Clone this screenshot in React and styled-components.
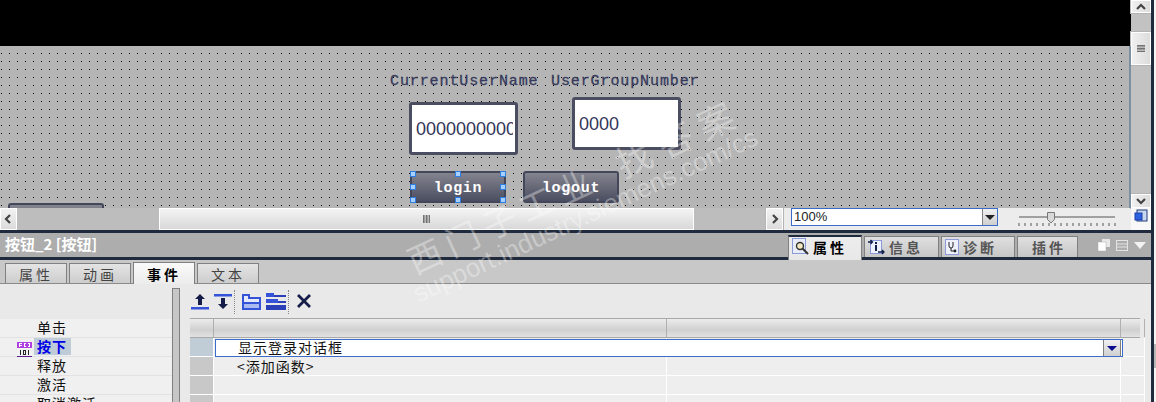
import React from 'react'
import styled, { createGlobalStyle } from 'styled-components'

const CJK = `"Noto Sans CJK SC", "Liberation Sans", sans-serif`

const GlobalStyle = createGlobalStyle`
  html, body {
    margin: 0;
    padding: 0;
    background: #f4f4f4;
  }
  * {
    box-sizing: border-box;
  }
`

const Page = styled.div`
  position: relative;
  width: 1156px;
  height: 402px;
  display: flex;
  overflow: hidden;
  font-family: ${CJK};
  background: #f4f4f4;
`

const MainColumn = styled.div`
  width: 1151px;
  flex: none;
  display: flex;
  flex-direction: column;
`

const OuterEdge = styled.div`
  width: 3px;
  flex: none;
  background: #1f2a3c;
`

const SideStrip = styled.div`
  width: 2px;
  flex: none;
  padding-top: 144px;
`

const SideMark = styled.div`
  height: 24px;
  margin-top: 200px;
  background: #b8b8b8;
`

/* editor area */
const Workspace = styled.div`
  display: flex;
  height: 230px;
  flex: none;
`

const EditorColumn = styled.div`
  width: 1131px;
  display: flex;
  flex-direction: column;
`

const BlackBand = styled.div`
  height: 46px;
  background: #000;
`

const Canvas = styled.div`
  position: relative;
  height: 162px;
  overflow: hidden;
  border-right: 2px solid #7c90a4;
  background-color: #000;
  background-image:
    linear-gradient(to bottom, #b5b5b5 7px, transparent 7px),
    linear-gradient(to right, #b5b5b5 7px, transparent 7px);
  background-size: 8px 8px;
  background-position: 2px 0;
`

const TagLabel = styled.div`
  position: absolute;
  top: ${p => p.$top}px;
  left: ${p => p.$left}px;
  font: 15px/16px "Liberation Mono", monospace;
  letter-spacing: 0.9px;
  color: #363a5c;
  -webkit-text-stroke: 0.3px #363a5c;
  white-space: nowrap;
`

const IoField = styled.div`
  position: absolute;
  top: ${p => p.$top}px;
  left: ${p => p.$left}px;
  width: 109px;
  height: 53px;
  padding-left: 4px;
  display: flex;
  align-items: center;
  background: #fff;
  border: 3px solid #4b4e60;
  border-radius: 3px;
  font: 18px/20px "Liberation Sans", sans-serif;
  color: #33365a;
`

const IoValue = styled.span`
  width: 97px;
  overflow: hidden;
  white-space: nowrap;
`

const HmiButton = styled.div`
  position: absolute;
  top: ${p => p.$top}px;
  left: ${p => p.$left}px;
  width: 96px;
  height: 32px;
  display: flex;
  align-items: center;
  justify-content: center;
  padding-top: 4px;
  background: linear-gradient(#83848f, #4b4e60);
  border: 2px solid #44475a;
  border-radius: 3px;
  font: bold 15px/16px "Liberation Mono", monospace;
  letter-spacing: 0.7px;
  color: #fff;
`

const Handle = styled.span`
  position: absolute;
  top: ${p => p.$top}px;
  left: ${p => p.$left}px;
  width: 6px;
  height: 6px;
  background: #a7d0ff;
  border: 1px solid #2f7de0;
`

const ScrollRow = styled.div`
  height: 22px;
  display: flex;
  background: #ececec;
`

const ScrollButton = styled.div`
  width: 17px;
  flex: none;
  display: flex;
  align-items: center;
  justify-content: center;
  background: linear-gradient(#f2f2f2, #dcdcdc);
  border: 1px solid #fff;
  box-shadow: 0 0 0 1px #b4b4b4;
`

const Track = styled.div`
  width: ${p => p.$width}px;
  flex: none;
  background: #bdbdbd;
`

const Thumb = styled.div`
  width: ${p => p.$width}px;
  flex: none;
  display: flex;
  align-items: center;
  justify-content: center;
  background: linear-gradient(#f4f4f4, #d8d8d8);
  border: 1px solid #fff;
`

const ZoomSelect = styled.div`
  width: 207px;
  height: 18px;
  margin-left: 8px;
  display: flex;
  background: #fff;
  border: 1px solid #3a6cc8;
  font: 13px/16px "Liberation Sans", sans-serif;
  color: #222;
`

const ZoomValue = styled.div`
  flex: 1;
  padding-left: 2px;
`

const DropButton = styled.div`
  width: ${p => p.$width || 15}px;
  flex: none;
  display: flex;
  align-items: center;
  justify-content: center;
  background: linear-gradient(#f0f0f0, #cfcfcf);
  border-left: 1px solid #808080;
  border-right: ${p => p.$framed ? '1px solid #808080' : 'none'};
  margin-right: ${p => p.$framed ? 1 : 0}px;
`

const DropArrow = styled.span`
  width: 0;
  height: 0;
  border-left: 5px solid transparent;
  border-right: 5px solid transparent;
  border-top: 5px solid ${p => p.$color || '#222'};
`

const SliderBox = styled.div`
  margin-left: 20px;
  width: 98px;
  flex: none;
`

const SliderSvg = styled.svg`
  display: block;
  margin-top: 3px;
`

const VScroll = styled.div`
  width: 20px;
  flex: none;
  display: flex;
  flex-direction: column;
  background: #c2c2c2;
`

const VButton = styled.div`
  height: ${p => p.$height}px;
  margin-top: ${p => p.$gap || 0}px;
  flex: none;
  display: flex;
  align-items: center;
  justify-content: center;
  background: linear-gradient(to right, #f0f0f0, #dcdcdc);
  border: 1px solid #fff;
  box-shadow: 0 0 0 1px #b4b4b4;
`

const VSpacer = styled.div`
  flex: 1;
`

const CornerBox = styled.div`
  height: 22px;
  display: flex;
  justify-content: center;
  background: #f8f8f8;
  padding-top: 1px;
`

/* inspector header */
const InspectorHeader = styled.div`
  height: 30px;
  flex: none;
  display: flex;
  align-items: flex-start;
  background: #adadad;
  border-top: 3px solid #1f2a3c;
  border-bottom: 3px solid #1f2a3c;
  padding-right: 5px;
`

const ObjectTitle = styled.div`
  flex: 1;
  padding: 1px 0 0 5px;
  font: bold 15px/20px ${CJK};
  color: #fff;
`

const ModeTabs = styled.div`
  display: flex;
  gap: 2px;
  margin-top: 3px;
`

const ModeTab = styled.div`
  width: ${p => p.$width}px;
  height: ${p => p.$active ? 25 : 21}px;
  margin-top: ${p => p.$active ? -1 : 0}px;
  padding: ${p => p.$active ? '0 0 4px 3px' : '0 0 1px 3px'};
  display: flex;
  align-items: center;
  justify-content: ${p => p.$center ? 'center' : 'flex-start'};
  gap: 4px;
  background: ${p => p.$active ? 'linear-gradient(#ededed, #e8e8e8)' : 'linear-gradient(#e0e0e0, #c6c6c6)'};
  border: 1px solid #808080;
  border-bottom: none;
  border-top: ${p => p.$active ? '2px solid #1f2a3c' : '1px solid #808080'};
  font: bold 14px/18px ${CJK};
  letter-spacing: 3px;
  color: ${p => p.$active ? '#000' : '#555'};
`

const WindowButtons = styled.div`
  display: flex;
  align-items: center;
  gap: 6px;
  margin: 6px 0 0 20px;
`

/* property tabs */
const TabStrip = styled.div`
  height: 24px;
  flex: none;
  display: flex;
  align-items: flex-end;
  gap: 2px;
  padding-left: 5px;
  background: #c8c8c8;
  border-bottom: 1px solid #8a8a8a;
`

const PropTab = styled.div`
  position: relative;
  width: 62px;
  height: ${p => p.$active ? 22 : 20}px;
  margin-bottom: ${p => p.$active ? -1 : 0}px;
  display: flex;
  align-items: center;
  justify-content: center;
  background: ${p => p.$active ? 'linear-gradient(#fafafa, #ececec)' : 'linear-gradient(#e4e4e4, #cdcdcd)'};
  border: 1px solid #808080;
  border-bottom: none;
  font: ${p => p.$active ? 'bold' : 'normal'} 14px/18px ${CJK};
  letter-spacing: 3px;
  color: ${p => p.$active ? '#000' : '#444'};
`

const Body = styled.div`
  height: 118px;
  flex: none;
  display: flex;
  overflow: hidden;
  background: #e9e9e9;
`

const EventPane = styled.div`
  width: 172px;
  flex: none;
  padding-top: 35px;
`

const EventRow = styled.div`
  height: 19px;
  display: flex;
  align-items: flex-start;
  padding-left: 17px;
  gap: 2px;
  background: #f0f0f0;
  border-bottom: 1px solid #e2e2e2;
`

const IconSlot = styled.div`
  width: 15px;
  height: 15px;
  flex: none;
`

const EventName = styled.span`
  padding-left: 3px;
  width: ${p => p.$active ? '37px' : 'auto'};
  font: ${p => p.$active ? 'bold' : 'normal'} 14px/17px ${CJK};
  letter-spacing: 1px;
  white-space: nowrap;
  color: ${p => p.$active ? '#0000e6' : '#111'};
  background: ${p => p.$active ? '#bfcbd6' : 'transparent'};
`

const PaneDivider = styled.div`
  width: 8px;
  height: 114px;
  margin-top: 4px;
  flex: none;
  background: #c6c6c6;
  border: 1px solid #808080;
  border-bottom: none;
`

const MainPane = styled.div`
  margin-left: 10px;
  width: 950px;
  flex: none;
  display: flex;
  flex-direction: column;
`

const Toolbar = styled.div`
  height: 34px;
  flex: none;
  display: flex;
  align-items: flex-start;
  padding: 9px 0 0 1px;
  gap: 5px;
`

const ToolSep = styled.div`
  width: 1px;
  height: 24px;
  margin: -3px 2px 0 -3px;
  border-left: 1px dotted #888;
`

const TableRow = styled.div`
  display: grid;
  flex: none;
  grid-template-columns: 24px 453px 454px 19px;
  height: ${p => p.$head ? 20 : 19}px;
  ${p => p.$head && `
    background: linear-gradient(#ececec, #d0d0d0 60%, #e2e2e2);
    border-top: 1px solid #a8a8a8;
    border-bottom: 1px solid #a8a8a8;
  `}
`

const Cell = styled.div`
  position: relative;
  min-width: 0;
  font: 14px/18px ${CJK};
  letter-spacing: 1px;
  color: #111;
  padding-left: 23px;
  white-space: nowrap;
  border-right: ${p => p.$head ? '1px solid #b0b0b0' : '1px solid #fff'};
  border-bottom: ${p => p.$head ? 'none' : '1px solid #fff'};
  background: ${p => p.$head ? 'transparent' : '#eeeeee'};
`

const EditorCell = styled(Cell)`
  z-index: 2;
`

const RowHeadCell = styled(Cell)`
  background: ${p => p.$head ? 'transparent' : p.$active ? '#c0ccd6' : '#c8c8c8'};
`

const CellEditor = styled.div`
  position: absolute;
  top: 1px;
  left: 1px;
  width: 908px;
  height: 18px;
  display: flex;
  justify-content: space-between;
  padding-left: 22px;
  background: #fff;
  border: 1px solid #3a6cc8;
  line-height: 15px;
`

/* watermark lies over everything */
const Watermark = styled.div`
  position: absolute;
  top: ${p => p.$top}px;
  left: ${p => p.$left}px;
  transform: rotate(-25deg);
  transform-origin: left top;
  font: ${p => p.$size}px/1 ${p => p.$latin ? '"Liberation Sans", sans-serif' : CJK};
  letter-spacing: ${p => p.$spacing || 0}px;
  color: rgba(255, 255, 255, 0.34);
  white-space: nowrap;
  pointer-events: none;
`

const Chevron = ({ dir }) => {
  const points = {
    left: '7,2 3,6 7,10',
    right: '4,2 8,6 4,10',
    up: '2,8 6,4 10,8',
    down: '2,4 6,8 10,4'
  }[dir]
  return (
    <svg width='12' height='12' viewBox='0 0 12 12'>
      <polyline points={points} fill='none' stroke='#444' strokeWidth='2.2' />
    </svg>
  )
}

const Grip = ({ vertical }) => (
  <svg width={vertical ? 8 : 7} height={vertical ? 7 : 8} viewBox={vertical ? '0 0 8 7' : '0 0 7 8'}>
    {[0, 1.5, 3, 4.5, 6].map(v => vertical
      ? <rect key={v} x='0' y={v} width='8' height='0.8' fill='#555' />
      : <rect key={v} x={v} y='0' width='0.8' height='8' fill='#555' />)}
  </svg>
)

const ZoomSlider = () => (
  <SliderSvg width='98' height='16' viewBox='0 0 98 16'>
    <line x1='1' y1='6' x2='97' y2='6' stroke='#555' />
    {Array.from({ length: 17 }, (_, i) => (
      <line key={i} x1={1 + i * 6} y1='12' x2={1 + i * 6} y2='15' stroke='#555' />
    ))}
    <path d='M29.5 1.5h7v7l-3.5 3.5l-3.5-3.5z' fill='#d8d8d8' stroke='#777' />
  </SliderSvg>
)

const CornerIcon = () => (
  <svg width='14' height='14' viewBox='0 0 14 14'>
    <rect x='3' y='1' width='10' height='11' fill='#c9d8ef' stroke='#1f3a78' />
    <rect x='1' y='4' width='7' height='7' fill='#2f62e0' stroke='#1c3fa8' />
  </svg>
)

const PropsIcon = () => (
  <svg width='17' height='17' viewBox='0 0 17 17'>
    <rect x='0.5' y='0.5' width='13' height='15' fill='#e8ecf8' stroke='#8b9bd8' />
    <circle cx='8' cy='8' r='3.5' fill='#f4e8c0' stroke='#333' strokeWidth='1.4' />
    <line x1='10.5' y1='10.5' x2='16' y2='16' stroke='#333' strokeWidth='2' />
  </svg>
)

const InfoIcon = () => (
  <svg width='17' height='16' viewBox='0 0 17 16'>
    <rect x='2.5' y='1.5' width='11' height='13' fill='#eef1fb' stroke='#8b9bd8' />
    <path d='M0 3h4M2.5 1l2 2l-2 2' fill='none' stroke='#10204a' strokeWidth='1.3' />
    <rect x='7' y='3' width='2' height='2' fill='#10204a' />
    <rect x='7' y='6' width='2' height='6' fill='#10204a' />
    <path d='M10 13h6M14 11l2 2l-2 2' fill='none' stroke='#10204a' strokeWidth='1.3' />
  </svg>
)

const DiagIcon = () => (
  <svg width='14' height='16' viewBox='0 0 14 16'>
    <rect x='0.5' y='0.5' width='13' height='15' fill='#eef1fb' stroke='#8b9bd8' />
    <path d='M4 3v4a2 2 0 0 0 4 0v-4M6 9v3h3' fill='none' stroke='#222' />
    <circle cx='10' cy='12' r='1.4' fill='#222' />
  </svg>
)

const WindowIcons = () => (
  <WindowButtons>
    <svg width='12' height='12' viewBox='0 0 12 12'>
      <rect x='4' y='0' width='8' height='8' fill='#e8e8e8' />
      <rect x='0' y='3' width='8' height='9' fill='#fff' stroke='#adadad' strokeWidth='0.5' />
    </svg>
    <svg width='12' height='11' viewBox='0 0 12 11'>
      <rect x='0.5' y='0.5' width='11' height='10' fill='none' stroke='#e4e4e4' />
      <line x1='1' y1='4' x2='11' y2='4' stroke='#e4e4e4' />
      <line x1='1' y1='7' x2='11' y2='7' stroke='#e4e4e4' />
    </svg>
    <svg width='12' height='7' viewBox='0 0 12 7'>
      <path d='M0 0h12l-6 7z' fill='#f2f2f2' />
    </svg>
  </WindowButtons>
)

const FunctionIcon = () => (
  <svg width='15' height='15' viewBox='0 0 15 15' shapeRendering='crispEdges'>
    <rect width='15' height='6' fill='#b040e0' />
    <rect y='6' width='15' height='8' fill='#f2f2f2' />
    <rect y='14' width='15' height='1' fill='#5a1a90' />
    <path d='M2.5 5V1.5H5M2.5 3H4.5M8.5 1.5H7.5V4.5H8.5M11 1.5h1.5V4.5H11' fill='none' stroke='#fff' />
    <path d='M3.5 8v5M6.5 8.5h2v4h-2zM11.5 8v5' fill='none' stroke='#222' />
  </svg>
)

const ToolUp = () => (
  <svg width='18' height='18' viewBox='0 0 18 18'>
    <path d='M9 1l5 5h-3v6H7V6H4z' fill='#141c48' />
    <rect x='0' y='14' width='18' height='2.5' fill='#3553d8' />
  </svg>
)

const ToolDown = () => (
  <svg width='18' height='18' viewBox='0 0 18 18'>
    <rect x='0' y='1' width='18' height='2.5' fill='#3553d8' />
    <path d='M7 5h4v6h3l-5 5l-5-5h3z' fill='#141c48' />
  </svg>
)

const ToolFolder = () => (
  <svg width='19' height='18' viewBox='0 0 19 18'>
    <path d='M1 2h6v3h11v11H1z' fill='#e4eafb' stroke='#3553d8' strokeWidth='2' />
    <rect x='1' y='9' width='17' height='2' fill='#3553d8' />
    <rect x='2' y='11' width='15' height='4' fill='#a9bbf0' />
  </svg>
)

const ToolList = () => (
  <svg width='20' height='18' viewBox='0 0 20 18'>
    <rect x='0' y='0' width='8' height='4' fill='#3553d8' />
    <rect x='8' y='2' width='12' height='2' fill='#2a3fb8' />
    <rect x='0' y='6' width='12' height='4' fill='#3553d8' />
    <rect x='12' y='8' width='8' height='2' fill='#2a3fb8' />
    <rect x='0' y='12' width='20' height='5' fill='#2a3fb8' />
  </svg>
)

const ToolDelete = () => (
  <svg width='16' height='16' viewBox='0 0 16 16'>
    <path d='M2 2l12 12M14 2L2 14' stroke='#141c48' strokeWidth='2.8' />
  </svg>
)

const handles = [
  [410, 125], [455, 125], [500, 125],
  [410, 138], [500, 138],
  [410, 151], [455, 151], [500, 151]
]

const events = ['单击', '按下', '释放', '激活', '取消激活']

export default function App () {
  return (
    <Page>
      <GlobalStyle />
      <MainColumn>
        <Workspace>
          <EditorColumn>
            <BlackBand />
            <Canvas>
              <TagLabel $top={28} $left={390}>CurrentUserName</TagLabel>
              <TagLabel $top={28} $left={551}>UserGroupNumber</TagLabel>
              <IoField $top={56} $left={409}><IoValue>0000000000</IoValue></IoField>
              <IoField $top={51} $left={572}><IoValue>0000</IoValue></IoField>
              <HmiButton $top={125} $left={410}>login</HmiButton>
              <HmiButton $top={125} $left={523}>logout</HmiButton>
              <HmiButton $top={157} $left={8} />
              {handles.map(([left, top]) => (
                <Handle key={`${left}-${top}`} $left={left} $top={top} />
              ))}
            </Canvas>
            <ScrollRow>
              <ScrollButton><Chevron dir='left' /></ScrollButton>
              <Track $width={142} />
              <Thumb $width={535}><Grip /></Thumb>
              <Track $width={72} />
              <ScrollButton><Chevron dir='right' /></ScrollButton>
              <ZoomSelect>
                <ZoomValue>100%</ZoomValue>
                <DropButton><DropArrow /></DropButton>
              </ZoomSelect>
              <SliderBox><ZoomSlider /></SliderBox>
            </ScrollRow>
          </EditorColumn>
          <VScroll>
            <VButton $height={13}><Chevron dir='up' /></VButton>
            <VButton $height={33} $gap={19}><Grip vertical /></VButton>
            <VSpacer />
            <VButton $height={14}><Chevron dir='down' /></VButton>
            <CornerBox><CornerIcon /></CornerBox>
          </VScroll>
        </Workspace>

        <InspectorHeader>
          <ObjectTitle>按钮_2 [按钮]</ObjectTitle>
          <ModeTabs>
            <ModeTab $width={74} $active><PropsIcon />属性</ModeTab>
            <ModeTab $width={75}><InfoIcon />信息</ModeTab>
            <ModeTab $width={74}><DiagIcon />诊断</ModeTab>
            <ModeTab $width={61} $center>插件</ModeTab>
          </ModeTabs>
          <WindowIcons />
        </InspectorHeader>

        <TabStrip>
          <PropTab>属性</PropTab>
          <PropTab>动画</PropTab>
          <PropTab $active>事件</PropTab>
          <PropTab>文本</PropTab>
        </TabStrip>

        <Body>
          <EventPane>
            {events.map(name => (
              <EventRow key={name}>
                <IconSlot>{name === '按下' && <FunctionIcon />}</IconSlot>
                <EventName $active={name === '按下'}>{name}</EventName>
              </EventRow>
            ))}
          </EventPane>
          <PaneDivider />
          <MainPane>
            <Toolbar>
              <ToolUp />
              <ToolDown />
              <ToolSep />
              <ToolFolder />
              <ToolList />
              <ToolSep />
              <ToolDelete />
            </Toolbar>
            <TableRow $head>
              <RowHeadCell $head /><Cell $head /><Cell $head /><Cell $head />
            </TableRow>
            <TableRow>
              <RowHeadCell $active />
              <EditorCell>
                <CellEditor>
                  显示登录对话框
                  <DropButton $width={18} $framed><DropArrow $color='#0a0a8c' /></DropButton>
                </CellEditor>
              </EditorCell>
              <Cell /><Cell />
            </TableRow>
            <TableRow>
              <RowHeadCell /><Cell>&lt;添加函数&gt;</Cell><Cell /><Cell />
            </TableRow>
            <TableRow>
              <RowHeadCell /><Cell /><Cell /><Cell />
            </TableRow>
            <TableRow>
              <RowHeadCell /><Cell /><Cell /><Cell />
            </TableRow>
          </MainPane>
        </Body>
      </MainColumn>
      <OuterEdge />
      <SideStrip><SideMark /></SideStrip>

      <Watermark $top={247} $left={402} $size={34} $spacing={7}>西门子工业</Watermark>
      <Watermark $top={148} $left={609} $size={36} $spacing={9}>找答案</Watermark>
      <Watermark $top={283} $left={409} $size={26} $latin>support.industry.siemens.com/cs</Watermark>
    </Page>
  )
}
